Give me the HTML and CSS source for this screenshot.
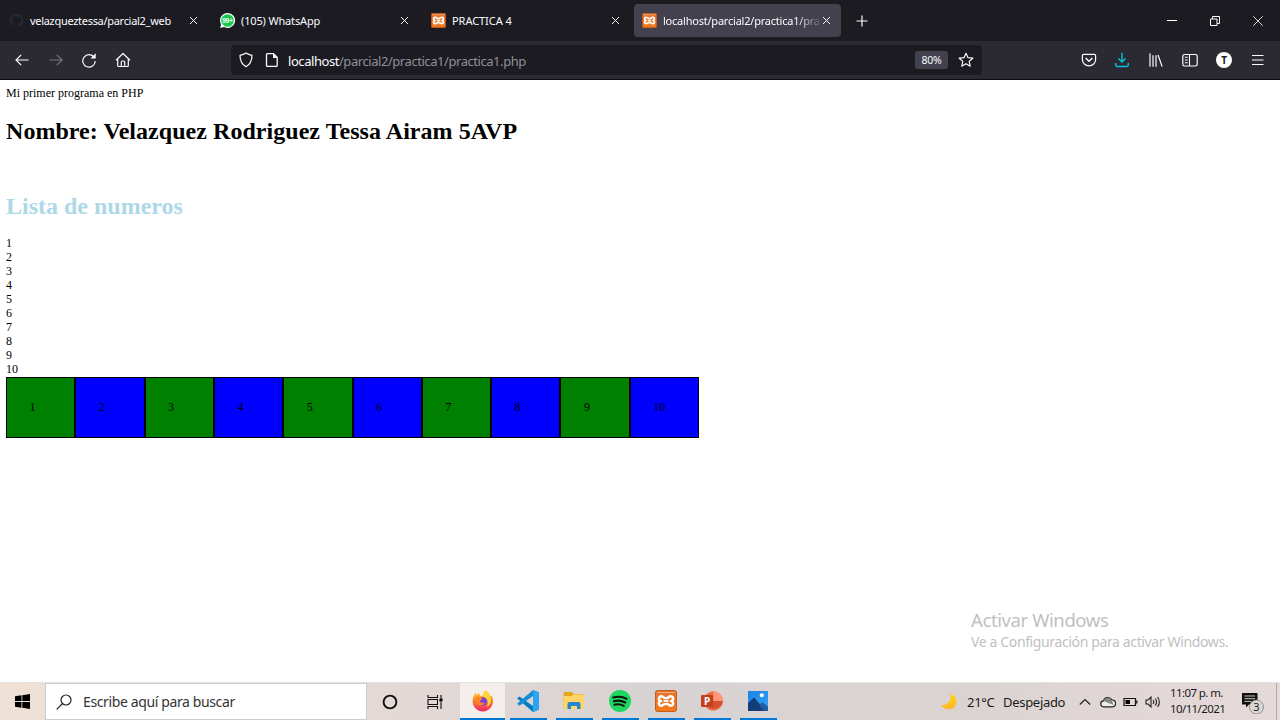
FILE: index.html
```html
<!DOCTYPE html>
<html lang="es">
<head>
<meta charset="utf-8">
<title>localhost/parcial2/practica1/practica1.php</title>
<link rel="stylesheet" href="styles.css">
</head>
<body>
<svg class="defs" width="0" height="0">
  <defs>
    <linearGradient id="fox" x1="0" y1="0" x2="0" y2="1"><stop offset="0" stop-color="#ffd93b"/><stop offset=".45" stop-color="#ff8a1e"/><stop offset="1" stop-color="#f2206c"/></linearGradient>
    <linearGradient id="xamppFill" x1="0" y1="0" x2="0" y2="1"><stop offset="0" stop-color="#e5762f"/><stop offset="1" stop-color="#f4771b"/></linearGradient>
    <linearGradient id="moon" x1="0" y1="0" x2="0" y2="1"><stop offset="0" stop-color="#ffd500"/><stop offset="1" stop-color="#ffb52e"/></linearGradient>
    <linearGradient id="sky" x1="0" y1="0" x2="1" y2="1"><stop offset="0" stop-color="#1f83e6"/><stop offset="1" stop-color="#31a4f5"/></linearGradient>
  </defs>
  <symbol id="close" viewBox="0 0 9 9"><path d="M1 1l7 7M8 1l-7 7" fill="none" stroke="currentColor" stroke-width="1"/></symbol>
  <symbol id="xampp" viewBox="0 0 22 22">
    <rect x=".5" y=".5" width="21" height="21" rx="2" fill="url(#xamppFill)" stroke="#c45a1c"/>
    <path d="M2 2.500h18" stroke="#f3a878"/>
    <path d="M8.200 14.800a2.400 2.400 0 1 1-2.300-3.800 2.400 2.400 0 1 1 2.300-3.800c1.500 1.200 4.100 1.200 5.600 0a2.400 2.400 0 1 1 2.300 3.800 2.400 2.400 0 1 1-2.300 3.800c-1.500-1.200-4.100-1.200-5.600 0z" fill="none" stroke="#fff" stroke-width="2.500" stroke-linejoin="round"/>
    <path d="M8.500 11h5" stroke="#fff" stroke-width="2"/>
  </symbol>
</svg>

<header class="tabs">
  <div class="tab">
    <svg class="favicon" viewBox="0 0 16 16"><path fill="#24292f" d="M8 .5a7.500 7.500 0 0 0-2.400 14.600c.4.100.5-.2.500-.4v-1.400c-2.100.500-2.500-.900-2.500-.9-.3-.9-.8-1.100-.8-1.100-.7-.5.100-.5.100-.5.700.100 1.100.8 1.100.8.700 1.200 1.800.800 2.200.600.100-.5.300-.8.500-1-1.700-.2-3.400-.8-3.400-3.700 0-.8.300-1.500.8-2-.1-.2-.3-1 .1-2 0 0 .6-.2 2 .800a7 7 0 0 1 3.700 0c1.400-1 2-.8 2-.8.400 1 .2 1.800.100 2 .5.500.8 1.200.8 2 0 2.900-1.700 3.500-3.400 3.700.3.200.5.700.5 1.400v2.100c0 .2.100.5.500.4A7.500 7.500 0 0 0 8 .5z"/></svg>
    <span class="tab-title t1">velazqueztessa/parcial2_web</span>
    <svg class="close"><use href="#close"/></svg>
  </div>
  <div class="tab">
    <svg class="favicon" viewBox="0 0 16 16"><path d="M8 0a8 8 0 1 1-3.700 15L.3 16l.8-4A8 8 0 0 1 8 0z" fill="#fff"/><circle cx="8" cy="8" r="6.700" fill="#15c94a"/><text x="7.900" y="10.600" text-anchor="middle" class="badge-text">99+</text></svg>
    <span class="tab-title t2">(105) WhatsApp</span>
    <svg class="close"><use href="#close"/></svg>
  </div>
  <div class="tab">
    <svg class="favicon"><use href="#xampp"/></svg>
    <span class="tab-title t3">PRACTICA 4</span>
    <svg class="close"><use href="#close"/></svg>
  </div>
  <div class="tab active">
    <svg class="favicon"><use href="#xampp"/></svg>
    <span class="tab-title t4">localhost/parcial2/practica1/pra</span>
    <svg class="close"><use href="#close"/></svg>
  </div>
  <svg class="new-tab" viewBox="0 0 12 12"><path d="M6 .5v11M.5 6h11" stroke="#fbfbfe" stroke-width="1.200"/></svg>
  <div class="window-controls">
    <svg viewBox="0 0 10 10"><path d="M0 4.500h10" stroke="#fff"/></svg>
    <svg viewBox="0 0 10 10"><path d="M.5 3h6.500v6.500H.5zM2.500 3V.5h7v7H7" fill="none" stroke="#fff"/></svg>
    <svg viewBox="0 0 10 10"><path d="M.3.3l9.400 9.400M9.700.3L.3 9.700" stroke="#eee" stroke-width=".9"/></svg>
  </div>
</header>

<nav class="toolbar">
  <div class="nav-buttons">
    <svg viewBox="0 0 16 16"><path d="M14.500 8H2M7.200 2.800L2 8l5.200 5.200" fill="none" stroke="#fbfbfe" stroke-width="1.200"/></svg>
    <svg viewBox="0 0 16 16"><path d="M1.500 8H14M8.800 2.800L14 8l-5.200 5.200" fill="none" stroke="#77767e" stroke-width="1.200"/></svg>
    <svg viewBox="0 0 16 16"><path d="M13.200 5.500A6.200 6.200 0 1 0 14.200 9" fill="none" stroke="#fbfbfe" stroke-width="1.200"/><path d="M14.700 1.300v5.200H9.500z" fill="#fbfbfe"/></svg>
    <svg viewBox="0 0 16 16"><path d="M1 8.200l7-6.700 7 6.700M2.700 7v6.500q0 1 1 1h8.600q1 0 1-1V7M6.300 14.500V10q0-1 1-1h1.400q1 0 1 1v4.500" fill="none" stroke="#fbfbfe" stroke-width="1.200" stroke-linejoin="round"/></svg>
  </div>
  <div class="address">
    <svg class="shield" viewBox="0 0 16 16"><path d="M8 1.100c1.600 1.100 3.800 1.900 6 2.200 0 5-1.500 9-6 11.400C3.500 12.300 2 8.300 2 3.300c2.200-.3 4.400-1.100 6-2.200z" fill="none" stroke="#fbfbfe" stroke-width="1.200" stroke-linejoin="round"/></svg>
    <svg class="page-icon" viewBox="0 0 14 16"><path d="M2.500 1.600h6l3.700 3.700v8.100q0 1-1 1H2.500q-1 0-1-1V2.600q0-1 1-1z" fill="none" stroke="#fbfbfe" stroke-width="1.300"/><path d="M8 1.500V6h4.500z" fill="#fbfbfe"/></svg>
    <span class="url"><b>localhost</b>/parcial2/practica1/practica1.php</span>
    <span class="zoom-level">80%</span>
    <svg class="star" viewBox="0 0 16 16"><path d="M8 1.300l2 4.400 4.800.5-3.600 3.200 1 4.800L8 11.700l-4.200 2.500 1-4.800L1.200 6.200 6 5.700z" fill="none" stroke="#fbfbfe" stroke-width="1.200" stroke-linejoin="round"/></svg>
  </div>
  <div class="tools">
    <svg viewBox="0 0 16 16"><path d="M2.700 2.300h10.600q1.300 0 1.300 1.300V7.500a6.600 6.300 0 0 1-13.200 0V3.600q0-1.300 1.300-1.300z" fill="none" stroke="#fbfbfe" stroke-width="1.200"/><path d="M4.600 6L8 9.200 11.400 6" fill="none" stroke="#fbfbfe" stroke-width="1.500"/></svg>
    <svg viewBox="0 0 16 16"><path d="M8 .8v9M4.400 6.400L8 10l3.600-3.600M1.700 11v1.500q0 2 2 2h8.600q2 0 2-2V11" fill="none" stroke="#00c4dc" stroke-width="1.400"/></svg>
    <svg viewBox="0 0 16 16"><path d="M2 1.200v13.600M5 3.200v11.600M8 3.200v11.600M10 3l4.200 11.600" fill="none" stroke="#fbfbfe" stroke-width="1.200"/></svg>
    <svg viewBox="0 0 16 16"><rect x=".8" y="2.500" width="14.400" height="11.500" rx="1.700" fill="none" stroke="#fbfbfe" stroke-width="1.200"/><path d="M7.500 2.500V14M2.800 5.300h3M2.800 8h3M2.800 10.700h3" stroke="#fbfbfe" stroke-width="1.100"/></svg>
    <span class="avatar">T</span>
    <svg viewBox="0 0 16 16"><path d="M2 3.500h11.500M2 8h11.500M2 12.500h11.500" stroke="#fbfbfe" stroke-width="1.200"/></svg>
  </div>
</nav>

<main class="page">
  <div class="line">Mi primer programa en PHP</div>
  <h1>Nombre: Velazquez Rodriguez Tessa Airam 5AVP</h1>
  <h1 class="list-title">Lista de numeros</h1>
  <div class="numbers">1<br>2<br>3<br>4<br>5<br>6<br>7<br>8<br>9<br>10</div>
  <div class="cells"><div>1</div><div>2</div><div>3</div><div>4</div><div>5</div><div>6</div><div>7</div><div>8</div><div>9</div><div>10</div></div>
  <aside class="activate"><p class="a1">Activar Windows</p><p class="a2">Ve a Configuración para activar Windows.</p></aside>
</main>

<footer class="taskbar">
  <div class="start"><svg viewBox="0 0 15 15"><path d="M0 2.200L6.500 1.300v5.800H0zM7.300 1.200L15 0v7.100H7.300zM0 7.900h6.500v5.800L0 12.800zM7.300 7.900H15V15l-7.700-1.200z"/></svg></div>
  <div class="search">
    <svg viewBox="0 0 16 16"><circle cx="10" cy="6" r="5" fill="none" stroke="#222" stroke-width="1.200"/><path d="M6.500 9.500L.7 15.300" stroke="#222" stroke-width="1.200"/></svg>
    <span>Escribe aquí para buscar</span>
  </div>
  <div class="apps">
    <div><svg viewBox="0 0 22 22"><circle cx="11" cy="11" r="6.400" fill="none" stroke="#111" stroke-width="1.900"/></svg></div>
    <div class="view"><svg viewBox="0 0 22 22"><path d="M4 4v2.500h9.500V4M4 18v-2.500h9.500V18M4 8.500h9.500v5H4zM17 4v3.500M17 11v7" fill="none" stroke="#111" stroke-width="1.100"/><path d="M15.500 7.500h3v3h-3z"/></svg></div>
    <div class="open current"><svg viewBox="0 0 22 22"><path d="M13.700.3c3 2 4.300 4.300 4.500 6.200l1-1.300c4.800 7-.4 16.300-8.200 16.300C4.200 21.500-1.100 15 1.100 7.500L2.300 5l1-2 1.900 2 1-2.500 2.200 3.200 2.300.100C11 3.400 12.200 1.500 13.700.3z" fill="url(#fox)"/><path d="M13.700.3c3 2 4.400 4.700 4.600 7 1.900 4-.4 8.500-3.300 9.500 2-4.800.5-8.800-4.200-10.500.1-2.700 1.200-4.800 2.900-6z" fill="#ffd53a"/><circle cx="10.800" cy="11.500" r="4.200" fill="#7442df"/><path d="M3.800 7.500c3-.9 5-.3 6.700 1.500L7.800 11c.8 2 3.500 2.300 5 1.200-1 4.200-7.100 4.300-8.300.4z" fill="#ff8126"/></svg></div>
    <div class="open"><svg viewBox="0 0 22 22"><path d="M16 0l6 2.500v17L16 22 0 8.200l2.500-1.800L16 16z" fill="#087bc1"/><path d="M16 0v6L2.500 15.800 0 13.800z" fill="#168ed6"/><path d="M16 0l6 2.500v17L16 22z" fill="#29a6ef"/></svg></div>
    <div class="open"><svg viewBox="0 0 22 22"><path d="M.5 3q0-1 1-1h7l2.500 2h9q1 0 1 1v14H.5z" fill="#e5a51c"/><path d="M.5 6h8l2-1.500H21V19H.5z" fill="#ffd665"/><path d="M4.500 19v-5q0-2 2-2h9q2 0 2 2v5h-3.500v-3H8v3z" fill="#2685cf"/></svg></div>
    <div class="open"><svg viewBox="0 0 22 22"><circle cx="11" cy="11" r="11" fill="#1ed760"/><path d="M4.200 7.500c4.800-1.400 9.500-1 13.500 1.300M4.800 11.300c4-1.200 8-.7 11.500 1.200M5.300 14.700c3.500-.9 6.600-.5 9.500 1.100" fill="none" stroke="#111" stroke-width="2" stroke-linecap="round"/></svg></div>
    <div class="open"><svg viewBox="0 0 22 22"><use href="#xampp"/></svg></div>
    <div class="open"><svg viewBox="0 0 22 22"><circle cx="12.300" cy="11" r="9.700" fill="#ed6c47"/><path d="M12.300 1.300a9.700 9.700 0 0 1 9.700 9.700h-9.700z" fill="#ff9675"/><path d="M3 11h19a9.700 9.700 0 0 1-19 0z" fill="#d35230"/><rect y="5" width="12" height="12" rx="1" fill="#c33f20"/><text x="6" y="14.500" text-anchor="middle" class="ppt">P</text></svg></div>
    <div class="open"><svg viewBox="0 0 22 22"><rect x="1" y="1" width="20" height="20" fill="url(#sky)"/><path d="M1 13l5.500-5Q7 7.500 7.500 8L19 21H1z" fill="#133d79"/><path d="M12 15l3-2.500q.5-.4 1 0l5 4.300V21h-3.700z" fill="#245ba6"/><circle cx="14.800" cy="5.300" r="2" fill="#fff"/></svg></div>
  </div>
  <div class="tray">
    <svg class="moon" viewBox="0 0 18 18"><path d="M10 1c2.500 6-2 11.500-9 11.500C5.500 19 17 17 16.500 8 16.300 4.600 13.800 1.900 10 1z" fill="url(#moon)"/></svg>
    <span class="temp">21°C</span><span class="weather">Despejado</span>
    <svg class="chev" viewBox="0 0 12 12"><path d="M.8 8.500L6 3.500l5.200 5" fill="none" stroke="#222" stroke-width="1.200"/></svg>
    <svg class="cloud" viewBox="0 0 16 12"><path d="M4 10.800a3 3 0 0 1-.5-6A4.700 4.700 0 0 1 12 4a3.400 3.400 0 0 1 .5 6.800z" fill="#eee" stroke="#222" stroke-width="1.200"/><path d="M3.500 5A4.500 4.500 0 0 1 12 4.500L13.500 9z" fill="#888"/></svg>
    <svg class="battery" viewBox="0 0 15 10"><path d="M1 1.500h11.500v7H1zM13.800 3.500v3" fill="none" stroke="#111" stroke-width="1.200"/><path d="M2.500 3H7v4H2.500z"/></svg>
    <svg class="sound" viewBox="0 0 16 14"><path d="M1 5h2l3-3v10L3 9H1zM8 5q1.500 2 0 4M10.300 3.500q2.500 3.500 0 7M12.600 2q3.500 5 0 10" fill="none" stroke="#222" stroke-width="1.100"/></svg>
    <div class="clock"><span>11:07 p. m.</span><span>10/11/2021</span></div>
    <div class="notify"><svg viewBox="0 0 24 24"><path d="M1 3h15.500v11.500H8L5 17.500v-3H1z" fill="#111"/><path d="M3.500 6h10.500M3.500 8.700H14M3.500 11.400h7" stroke="#ddd" stroke-width=".9"/><circle cx="15.500" cy="17" r="7" fill="#dcd7d6" stroke="#888" stroke-width=".9"/><text x="15.500" y="21" text-anchor="middle" class="count">3</text></svg></div>
  </div>
</footer>
</body>
</html>
```

FILE: styles.css
```css
* { box-sizing: border-box; }
body { margin: 0; width: 1280px; height: 720px; overflow: hidden; display: flex; flex-direction: column; font-family: "Noto Sans", "Open Sans", sans-serif; background: #fff; }
svg { display: block; flex: none; }
.defs { position: absolute; }

.tabs { height: 41px; flex: none; background: #1c1b22; display: flex; align-items: center; gap: 4px; padding-left: 1px; color: #fbfbfe; }
.tab { width: 207px; height: 33px; flex: none; display: flex; align-items: center; padding: 0 10px 0 8px; border-radius: 4px; }
.tab.active { background: #42414d; }
.favicon { width: 15px; height: 15px; margin-right: 6px; }
.tab-title { flex: 1; min-width: 0; white-space: nowrap; font-size: 11px; line-height: 20px; }
.t1 { letter-spacing: -.3px; }
.t2 { letter-spacing: -.16px; }
.t3 { letter-spacing: -.05px; }
.t4 { letter-spacing: -.22px; -webkit-mask-image: linear-gradient(to right, #000 132px, transparent 161px); mask-image: linear-gradient(to right, #000 132px, transparent 161px); }
.close { width: 9px; height: 9px; }
.badge-text { font: bold 7px "Liberation Sans", sans-serif; fill: #fff; letter-spacing: -.2px; }
.new-tab { width: 12px; height: 12px; margin-left: 11px; }
.window-controls { margin-left: auto; display: flex; gap: 33px; padding-right: 17px; }
.window-controls svg { width: 10px; height: 10px; }

.toolbar { height: 39px; flex: none; background: #2b2a33; border-bottom: 1px solid #0d0d10; display: flex; align-items: center; padding-left: 14px; }
.nav-buttons { width: 217px; flex: none; display: flex; gap: 17.700px; }
.nav-buttons svg, .tools svg { width: 16px; height: 16px; }
.address { width: 751px; height: 30px; flex: none; background: #1c1b22; border-radius: 4px; display: flex; align-items: center; padding-left: 7px; }
.shield, .star { width: 16px; height: 16px; }
.page-icon { width: 14px; height: 16px; margin-left: 11px; }
.url { width: 636px; flex: none; padding-left: 9px; font-size: 13px; line-height: 18px; padding-top: 1px; letter-spacing: -.44px; color: #8f8f98; white-space: nowrap; }
.url b { font-weight: 400; color: #fbfbfe; }
.zoom-level { width: 33px; height: 18px; flex: none; border-radius: 3px; background: #42414d; color: #fbfbfe; font-size: 10.500px; letter-spacing: -.2px; line-height: 19px; text-align: center; margin-right: 10px; }
.tools { flex: 1; display: flex; align-items: center; justify-content: space-between; padding: 0 14px 0 98.500px; }
.avatar { width: 16px; height: 16px; border-radius: 50%; background: #fff; color: #1c1b22; font-size: 10px; line-height: 16px; text-align: center; font-weight: 700; }

.page { flex: 1; position: relative; padding: 6px; font-family: "Liberation Serif", serif; font-size: 12px; line-height: 14px; color: #000; }
.page h1 { margin: 16px 0 0; font-size: 24px; line-height: 30px; letter-spacing: .045px; white-space: nowrap; }
.page .list-title { margin-top: 45px; letter-spacing: 0; color: #add8e6; }
.numbers { margin-top: 15px; }
.cells { width: 693px; height: 61px; margin-top: 1px; display: grid; grid-template-columns: repeat(10, 1fr); }
.cells div { border: 1px solid #000; background: #008000; padding: 22px 0 0 22.500px; }
.cells div:nth-child(even) { background: #00f; }
.activate { position: absolute; left: 971px; top: 528px; font-family: "Noto Sans", sans-serif; color: #bfbfbf; white-space: nowrap; }
.activate p { margin: 0; }
.a1 { font-size: 18.500px; line-height: 24px; letter-spacing: -.4px; }
.a2 { font-size: 14px; line-height: 20px; letter-spacing: -.37px; }

.taskbar { height: 38px; flex: none; display: flex; background: linear-gradient(to right, #f0e1d6, #e5d9d6 30%, #d8d3d3 50%, #dad3d2 75%, #e6dad9); border-top: 1px solid #e5e3e2; color: #1a1a1a; }
.start { width: 45px; display: flex; align-items: center; justify-content: center; }
.start svg { width: 15px; height: 15px; }
.search { width: 322px; background: #fff; border: 1px solid #ccc; display: flex; align-items: center; padding-left: 10px; gap: 11px; font-size: 14px; letter-spacing: -.38px; color: #333; }
.search svg { width: 16px; height: 16px; }
.apps { display: flex; }
.apps > div { width: 46px; height: 37px; display: flex; align-items: center; justify-content: center; }
.apps > .view { width: 44px; }
.apps svg { width: 22px; height: 22px; }
.apps > .open { flex-direction: column; justify-content: space-between; padding-top: 7px; }
.apps > .open::after { content: ""; width: 37px; height: 2px; background: #0078d7; flex: none; }
.apps > .current { width: 45px; margin-left: 3px; background: #f4efed; }
.apps > .current::after { width: 45px; }
.ppt { font: bold 10px "Noto Sans", sans-serif; fill: #fff; }
.tray { flex: 1; display: flex; align-items: center; justify-content: flex-end; border-right: 1px solid #aaa; margin-right: 3px; white-space: nowrap; }
.moon { width: 18px; height: 18px; margin-right: 9px; }
.temp, .weather { font-size: 13px; letter-spacing: -.3px; }
.temp { width: 36px; }
.weather { width: 76px; }
.chev { width: 12px; height: 12px; margin-right: 9px; }
.cloud { width: 16px; height: 12px; margin-right: 7px; }
.battery { width: 15px; height: 10px; margin-right: 7px; }
.sound { width: 16px; height: 14px; margin-right: 9px; }
.clock { width: 54px; display: flex; flex-direction: column; font-size: 11.500px; letter-spacing: -.6px; line-height: 16px; padding-bottom: 2px; }
.notify { margin: 0 11px 0 17px; }
.notify svg { width: 24px; height: 24px; }
.count { font: 11px "Noto Sans", sans-serif; fill: #222; }
```
